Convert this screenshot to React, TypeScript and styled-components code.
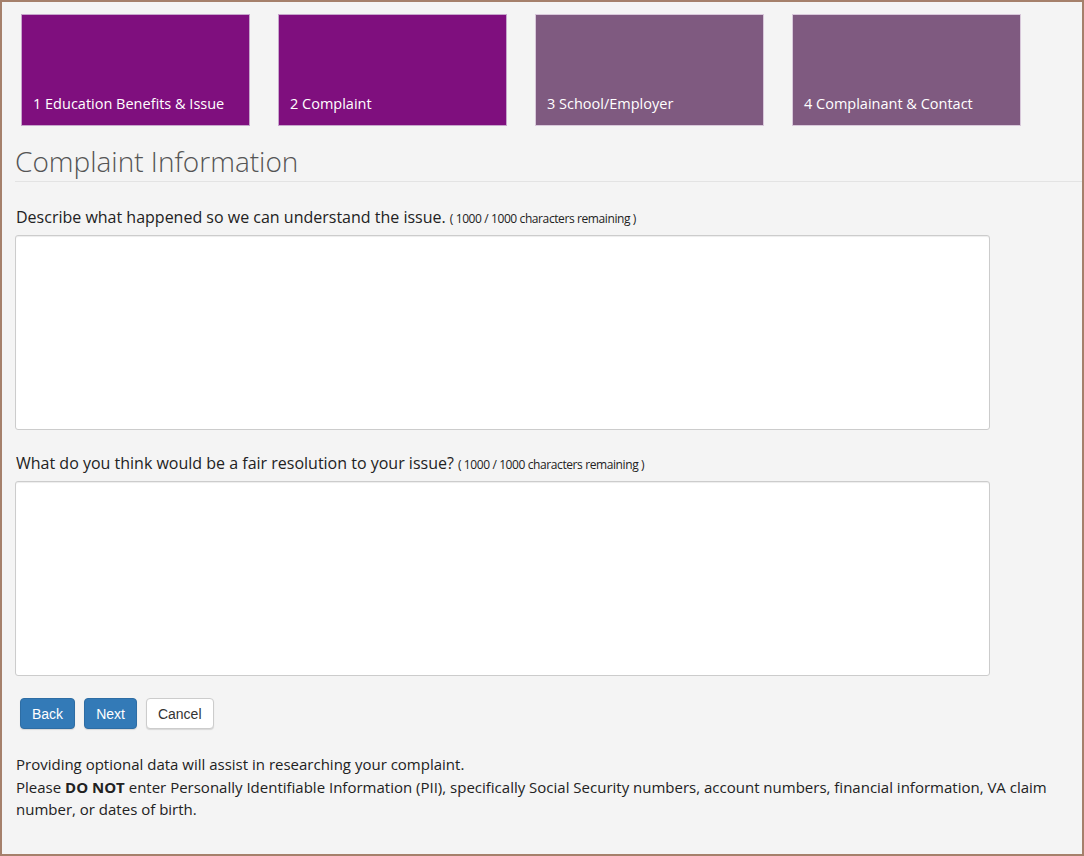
import React from "react";
import styled, { createGlobalStyle } from "styled-components";

const Global = createGlobalStyle`
  html, body { margin: 0; padding: 0; background: #f4f4f4; }
  * { box-sizing: border-box; }
`;

const Frame = styled.div`
  width: 1084px;
  height: 856px;
  border: 2px solid #a5806b;
  background: #f4f4f4;
  font-family: "Open Sans", "Noto Sans", sans-serif;
  color: #333;
  overflow: hidden;
`;

const Steps = styled.div`
  display: flex;
  gap: 28px;
  padding: 12px 0 0 19px;
`;

const Step = styled.div<{ $active?: boolean }>`
  width: 229px;
  height: 112px;
  background: ${(p) => (p.$active ? "#7f0f7e" : "#7f5a80")};
  border: 1px solid ${(p) => (p.$active ? "#c7a6cc" : "#d8c8da")};
  color: #fff;
  display: flex;
  align-items: flex-end;
  padding: 0 0 12px 11px;
  font-size: 14.5px;
`;

const Heading = styled.h1`
  margin: 17px 0 0 13px;
  padding-bottom: 2px;
  font-family: "Open Sans", sans-serif;
  font-weight: 300;
  font-size: 28px;
  color: #555;
  line-height: 36px;
`;

const Rule = styled.div`
  height: 1px;
  background: #e3e3e3;
  margin-left: 13px;
`;

const Content = styled.div`
  padding: 2px 0 0 13px;
`;

const Label = styled.div`
  font-size: 16px;
  color: #222;
  line-height: 20px;
  margin: 23px 0 6px 1px;
  white-space: nowrap;
`;

const Small = styled.span`
  font-size: 12px;
  letter-spacing: -0.4px;
`;

const TextArea = styled.textarea`
  display: block;
  width: 975px;
  height: 195px;
  background: #fff;
  border: 1px solid #ccc;
  border-radius: 3px;
  box-shadow: inset 0 1px 1px rgba(0, 0, 0, 0.075);
  resize: none;
  outline: none;
`;

const Buttons = styled.div`
  display: flex;
  gap: 9px;
  margin: 22px 0 0 5px;
`;

const Button = styled.button<{ $primary?: boolean }>`
  height: 31px;
  padding: 0 11px;
  font-family: "Liberation Sans", Arial, sans-serif;
  font-size: 14px;
  border-radius: 4px;
  border: 1px solid ${(p) => (p.$primary ? "#2e6da4" : "#ccc")};
  background: ${(p) => (p.$primary ? "#337ab7" : "#fff")};
  color: ${(p) => (p.$primary ? "#fff" : "#333")};
  box-shadow: 0 1px 1px rgba(0, 0, 0, 0.12);
`;

const Note = styled.div`
  margin: 24px 0 0 1px;
  font-size: 15px;
  line-height: 22.5px;
  color: #222;
  width: 1050px;
`;

export default function App() {
  return (
    <>
      <Global />
      <Frame>
        <Steps>
          <Step $active>1 Education Benefits &amp; Issue</Step>
          <Step $active>2 Complaint</Step>
          <Step>3 School/Employer</Step>
          <Step>4 Complainant &amp; Contact</Step>
        </Steps>
        <Heading>Complaint Information</Heading>
        <Rule />
        <Content>
          <Label>
            Describe what happened so we can understand the issue.{" "}
            <Small>( 1000 / 1000 characters remaining )</Small>
          </Label>
          <TextArea />
          <Label>
            What do you think would be a fair resolution to your issue?{" "}
            <Small>( 1000 / 1000 characters remaining )</Small>
          </Label>
          <TextArea />
          <Buttons>
            <Button $primary>Back</Button>
            <Button $primary>Next</Button>
            <Button>Cancel</Button>
          </Buttons>
          <Note>
            Providing optional data will assist in researching your complaint.
            <br />
            Please <b>DO NOT</b> enter Personally Identifiable Information (PII), specifically Social Security
            numbers, account numbers, financial information, VA claim number, or dates of birth.
          </Note>
        </Content>
      </Frame>
    </>
  );
}
